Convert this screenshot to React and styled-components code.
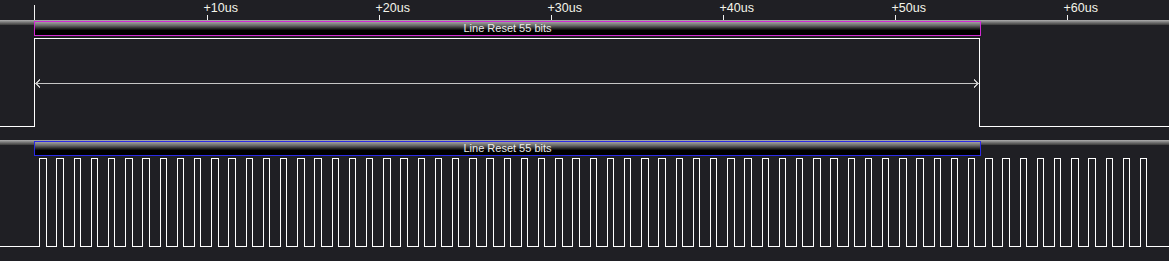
import React from 'react';
import styled, { createGlobalStyle } from 'styled-components';

const PX_PER_US = 17.2;
const ORIGIN = 34.5;
const WIDTH = 1169;

const GlobalStyle = createGlobalStyle`
  html, body {
    margin: 0;
    padding: 0;
    background: #1f1f24;
  }
`;

const Page = styled.div`
  width: ${WIDTH}px;
  height: 261px;
  background: #1f1f24;
  display: flex;
  flex-direction: column;
  overflow: hidden;
  font-family: 'Liberation Sans', Arial, sans-serif;
`;

const RulerSvg = styled.svg`
  display: block;
  flex: 0 0 20px;
`;

const Channel = styled.div`
  display: flex;
  flex-direction: column;
  height: 120px;
`;

const BarTrack = styled.div`
  display: flex;
  height: 16px;
  background: linear-gradient(#b0b0b0, #7e7e7e 40%, #3a3a3a) top left / 100% 5px no-repeat;
`;

const Frame = styled.div`
  box-sizing: border-box;
  margin-top: 1px;
  height: 15px;
  border: 1px solid ${p => p.color};
  background: linear-gradient(#a0a0a0, #6c6c6c 25%, #262626 50%, #000 65%) padding-box;
  color: #ececec;
  font-size: 11px;
  line-height: 13px;
  text-align: center;
  white-space: nowrap;
  overflow: hidden;
`;

const WaveSvg = styled.svg`
  display: block;
  flex: 0 0 104px;
`;

const ticks = [10, 20, 30, 40, 50, 60];

function Ruler() {
  return (
    <RulerSvg width={WIDTH} height={20} shapeRendering="crispEdges">
      <line x1={34.5} y1={5} x2={34.5} y2={20} stroke="#f4f4f4" />
      {ticks.map(t => {
        const x = Math.round(ORIGIN + t * PX_PER_US) + 0.5;
        return (
          <g key={t}>
            <line x1={x} y1={15} x2={x} y2={20} stroke="#f0f0f0" />
            <text
              x={x - 4}
              y={12}
              fill="#f4f4ea"
              fontSize="12.5"
              fontFamily="'Liberation Sans', Arial, sans-serif"
            >
              +{t}us
            </text>
          </g>
        );
      })}
    </RulerSvg>
  );
}

const HIGH = 2.5;
const LOW = 90.5;

function resetPath() {
  const rise = 34.5;
  const fall = 979.5;
  return `M0 ${LOW} H${rise} V${HIGH} H${fall} V${LOW} H${WIDTH}`;
}

function clockPath() {
  let d = `M0 ${LOW}`;
  for (let k = 0; k < 65; k++) {
    const r = Math.round(39.3 + k * 17.198) + 0.5;
    const f = Math.round(39.3 + k * 17.198 + 6.4) + 0.5;
    d += ` H${r} V${HIGH} H${f} V${LOW}`;
  }
  d += ` H${WIDTH}`;
  return d;
}

function Span({ y }) {
  const x1 = 36;
  const x2 = 978;
  return (
    <g stroke="#c6c6c6" fill="none">
      <line x1={x1} y1={y} x2={x2} y2={y} />
      <polyline points={`${x1 + 4},${y - 4} ${x1},${y} ${x1 + 4},${y + 4}`} />
      <polyline points={`${x2 - 4},${y - 4} ${x2},${y} ${x2 - 4},${y + 4}`} />
    </g>
  );
}

const channels = [
  { id: 'rst', color: '#d22ad2', label: 'Line Reset 55 bits', path: resetPath(), span: true },
  { id: 'clk', color: '#2a2ae6', label: 'Line Reset 55 bits', path: clockPath(), span: false },
];

export default function App() {
  const barLeft = 34;
  const barWidth = Math.round(55 * PX_PER_US) + 1;
  return (
    <>
      <GlobalStyle />
      <Page>
        <Ruler />
        {channels.map(ch => (
          <Channel key={ch.id}>
            <BarTrack>
              <div style={{ width: barLeft, flex: 'none' }} />
              <Frame color={ch.color} style={{ width: barWidth }}>
                {ch.label}
              </Frame>
            </BarTrack>
            <WaveSvg width={WIDTH} height={104} shapeRendering="crispEdges">
              <path d={ch.path} stroke="#ffffff" fill="none" />
              {ch.span && <Span y={47.5} />}
            </WaveSvg>
          </Channel>
        ))}
      </Page>
    </>
  );
}
